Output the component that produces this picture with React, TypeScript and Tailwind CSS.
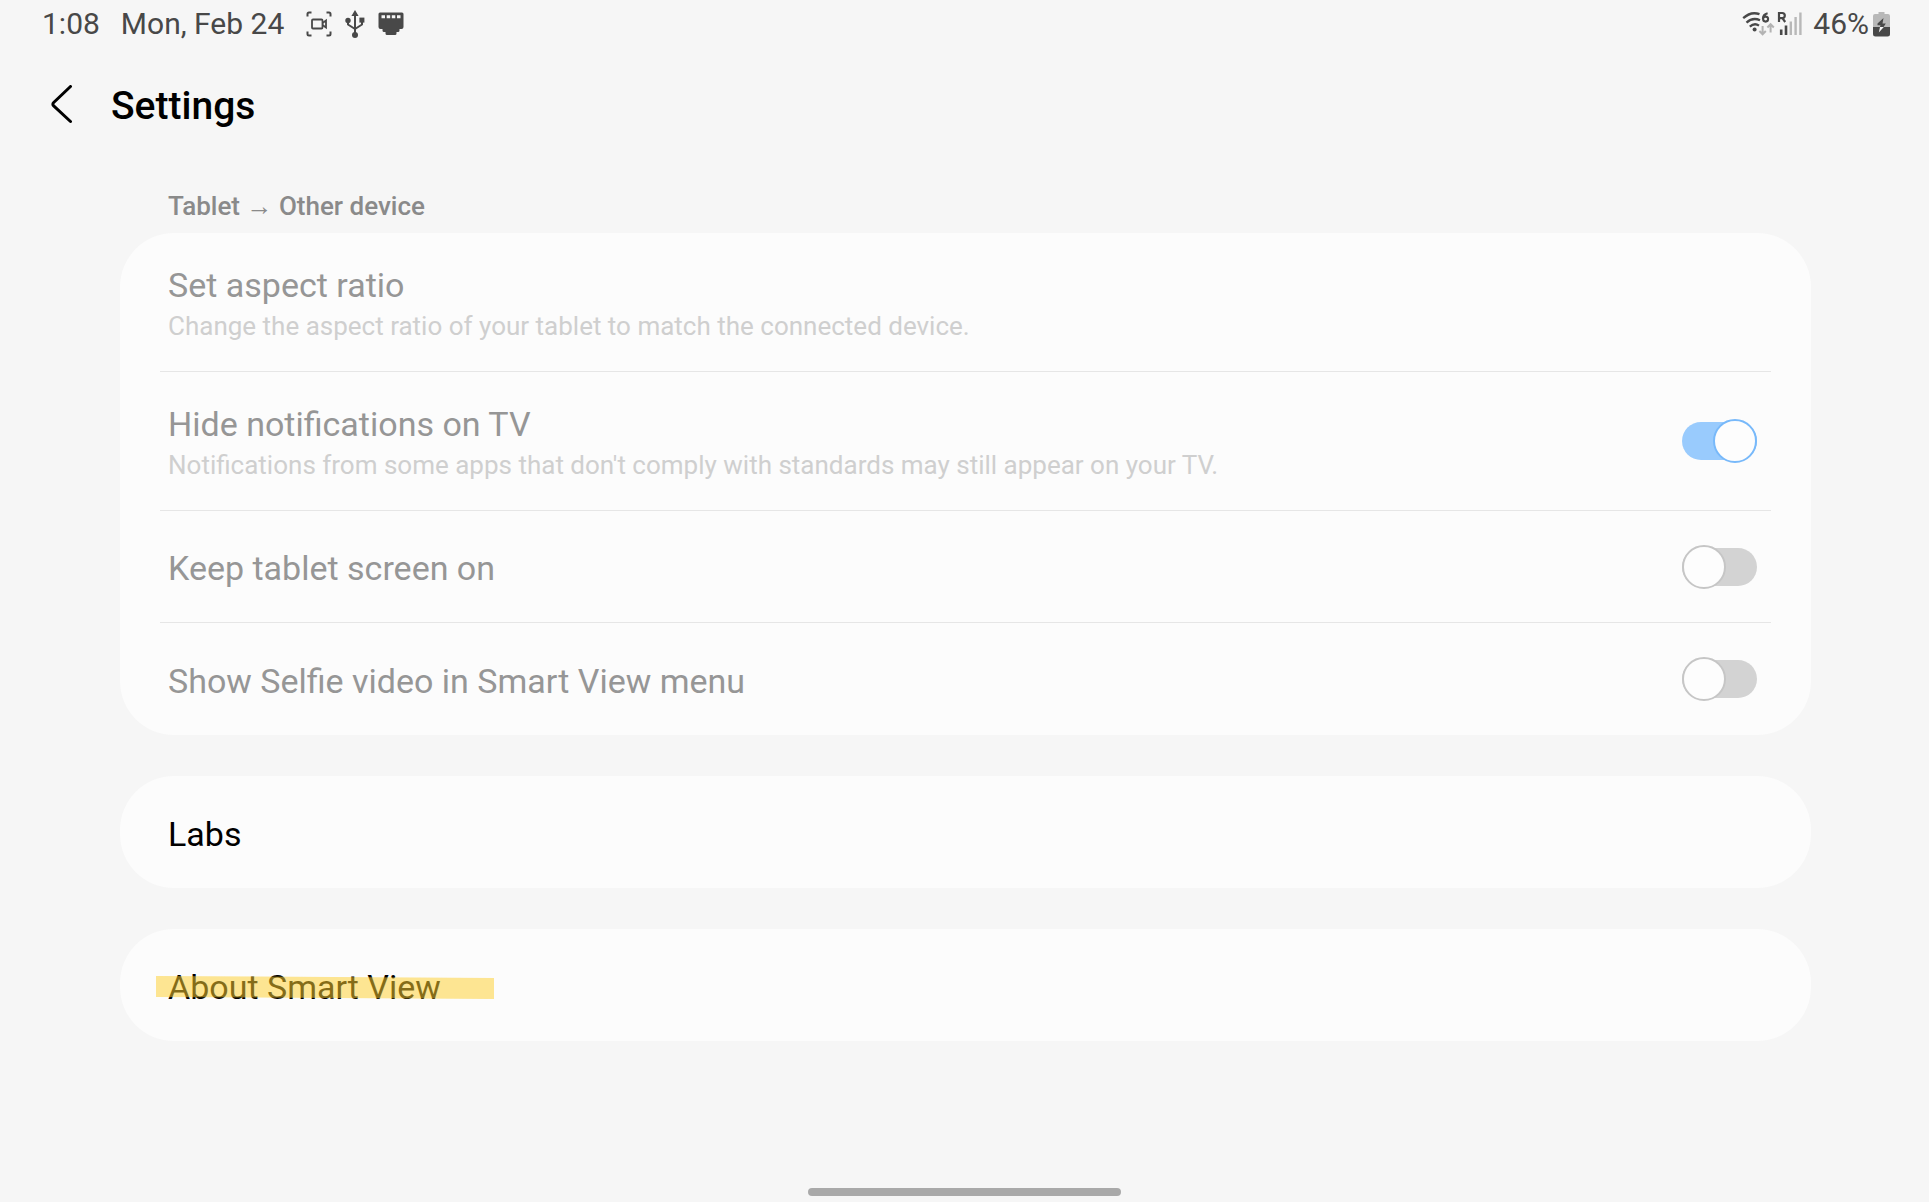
import type { ReactNode } from "react";

type Setting = {
  id: string;
  title: string;
  description?: string;
  checked?: boolean;
};

const mirroringSettings: Setting[] = [
  { id: "aspect-ratio", title: "Set aspect ratio", description: "Change the aspect ratio of your tablet to match the connected device." },
  {
    id: "hide-notifications",
    title: "Hide notifications on TV",
    description: "Notifications from some apps that don't comply with standards may still appear on your TV.",
    checked: true,
  },
  { id: "keep-screen-on", title: "Keep tablet screen on", checked: false },
  { id: "selfie-video", title: "Show Selfie video in Smart View menu", checked: false },
];

function RecordIcon() {
  return (
    <svg width="26" height="26" viewBox="0 0 26 26" fill="none" stroke="#484848" strokeWidth="2">
      <path d="M1.5 5.5V3Q1.5 1.5 3 1.5H5.5M20.5 1.5H23Q24.5 1.5 24.5 3V5.5M24.5 20.5V23Q24.5 24.5 23 24.5H20.5M5.5 24.5H3Q1.5 24.5 1.5 23V20.5" />
      <rect x="6" y="8.5" width="10.5" height="9" rx="1" strokeWidth="1.8" />
      <path d="M16.5 12L20 9.5V16.5L16.5 14" strokeWidth="1.8" />
    </svg>
  );
}

function UsbIcon() {
  return (
    <svg width="20" height="28" viewBox="0 0 20 28" fill="none">
      <path d="M10 4V24M3 10V14.5L10 19L17 14.5V10" stroke="#484848" strokeWidth="2" strokeLinejoin="round" />
      <path d="M10 0L13.6 6H6.4Z" fill="#484848" />
      <circle cx="10" cy="25" r="3" fill="#484848" />
      <circle cx="3" cy="10.5" r="2.7" fill="#484848" />
      <rect x="14.4" y="7.6" width="5" height="5" fill="#484848" />
    </svg>
  );
}

function EthernetIcon() {
  return (
    <svg width="26" height="24" viewBox="0 0 26 24">
      <path d="M2 0.5H24Q25.5 0.5 25.5 2V15Q25.5 17 23.5 17H21.5V18.5Q21.5 20 20 20H18.5V21.5Q18.5 23 17 23H9Q7.5 23 7.5 21.5V20H6Q4.5 20 4.5 18.5V17H2.5Q0.5 17 0.5 15V2Q0.5 0.5 2 0.5Z" fill="#484848" />
      <path d="M3.5 3.2H7V6.2H3.5ZM8.7 3.2H12.2V6.2H8.7ZM13.8 3.2H17.3V6.2H13.8ZM19 3.2H22.5V6.2H19Z" fill="#f6f6f6" />
    </svg>
  );
}

function WifiIcon() {
  return (
    <svg width="33" height="26" viewBox="0 0 33 26" fill="none">
      <g stroke="#484848" strokeWidth="2.3">
        <path d="M1.2 7.2Q9 0 17.5 3.2" />
        <path d="M4.5 11.6Q10.5 6 18 9.2" />
        <path d="M7.8 15.6Q12.5 11.5 17 14.6" />
      </g>
      <circle cx="12.6" cy="18.6" r="2" fill="#484848" />
      <path d="M25.6 2.2Q20.9 3.4 20.9 7.8M23.6 5.6A2.5 2.5 0 1 1 23.6 10.6A2.5 2.5 0 1 1 23.6 5.6" stroke="#484848" strokeWidth="2.1" />
      <path d="M20.6 15V23M17.4 20L20.6 23.3L23.8 20M28.6 21.5V13.5M25.4 16.5L28.6 13.2L31.8 16.5" stroke="#b3b3b3" strokeWidth="2" />
    </svg>
  );
}

function SignalIcon() {
  return (
    <svg width="26" height="26" viewBox="0 0 26 26" fill="none">
      <path d="M2 11V2H5.2A2.5 2.5 0 0 1 5.2 7.2H2M5.4 7.2L8.2 11" stroke="#484848" strokeWidth="2.2" />
      <path d="M4.2 24V18.6M9 24V14.6" stroke="#484848" strokeWidth="2.6" />
      <path d="M13.8 24V10.4M18.6 24V6M23.4 24V1.5" stroke="#b8b8b8" strokeWidth="2.4" />
    </svg>
  );
}

function BatteryIcon() {
  return (
    <svg width="17" height="25" viewBox="0 0 17 25">
      <path d="M5.5 0H11.5V2H15Q17 2 17 4V15H0V4Q0 2 2 2H5.5Z" fill="#b8b8b8" />
      <path d="M0 15H17V22Q17 24.5 14.5 24.5H2.5Q0 24.5 0 22Z" fill="#484848" />
      <path d="M10.5 6L4.5 11.5V13.2H7.5L7 15H10.5L12.8 11.5H9.5Z" fill="#484848" />
      <path d="M7 15H10.8L5.8 20.5Z" fill="#f6f6f6" />
    </svg>
  );
}

function StatusBar() {
  return (
    <div className="flex h-12 items-center justify-between pl-[42px] pr-[39px] text-[30px] leading-[48px] text-[#484848]">
      <div className="flex items-center">
        <span>1:08</span>
        <span className="ml-[21px]">Mon, Feb 24</span>
        <div className="ml-[22px] flex items-center gap-[13px]">
          <RecordIcon />
          <UsbIcon />
          <EthernetIcon />
        </div>
      </div>
      <div className="flex items-center">
        <WifiIcon />
        <span className="ml-[2px]"><SignalIcon /></span>
        <span className="ml-[10px]">46%</span>
        <span className="ml-1"><BatteryIcon /></span>
      </div>
    </div>
  );
}

function Card({ children }: { children: ReactNode }) {
  return <div className="rounded-[54px] bg-[#fcfcfc]">{children}</div>;
}

function Switch({ id, checked }: { id: string; checked: boolean }) {
  return (
    <input
      id={id}
      type="checkbox"
      role="switch"
      defaultChecked={checked}
      disabled
      className="relative h-[38px] w-[75px] shrink-0 appearance-none rounded-full bg-[#d3d3d3] before:absolute before:-top-[3px] before:left-0 before:size-11 before:rounded-full before:border-2 before:border-[#c6c6c6] before:bg-[#fdfdfd] checked:bg-[#99cbfd] checked:before:left-[31px] checked:before:border-[#78b9fa]"
    />
  );
}

function SettingRow({ setting }: { setting: Setting }) {
  const text = (
    <>
      <span className="block text-[34px] leading-[44px] text-[#969696]">{setting.title}</span>
      {setting.description && (
        <span className="block text-[26px] leading-[38px] text-[#cfcfcf]">{setting.description}</span>
      )}
    </>
  );
  const height = setting.description ? "min-h-[139px]" : "min-h-28";

  if (setting.checked === undefined) {
    return (
      <button type="button" disabled className={`${height} block w-full pl-2 pt-[3px] text-left`}>
        {text}
      </button>
    );
  }

  return (
    <div className={`${height} flex items-center justify-between pl-2 pr-[14px]`}>
      <label htmlFor={setting.id} className="pt-[3px]">{text}</label>
      <Switch id={setting.id} checked={setting.checked} />
    </div>
  );
}

export default function App() {
  return (
    <div className="flex min-h-screen flex-col bg-[#f6f6f6] font-['Roboto',sans-serif]">
      <StatusBar />

      <header className="flex h-[116px] items-center pl-[49px]">
        <button type="button" aria-label="Back" className="flex h-12 w-[26px] items-center">
          <svg width="26" height="42" viewBox="0 0 26 42" fill="none" stroke="#000" strokeWidth="3" strokeLinecap="round" strokeLinejoin="round">
            <path d="M21.5 1.5L4.7 17.5Q3 19.2 4.7 20.9L21.5 36.5" />
          </svg>
        </button>
        <h1 className="ml-9 text-[39px] font-medium leading-[48px] text-black">Settings</h1>
      </header>

      <main className="flex-1 pl-[120px] pr-[118px]">
        <h2 className="mt-6 mb-[9px] pl-12 text-[26px] font-medium leading-9 text-[#8a8a8a]">
          Tablet → Other device
        </h2>

        <div className="flex flex-col gap-[41px]">
          <Card>
            <div className="divide-y divide-[#e6e6e6] px-10">
              {mirroringSettings.map((setting) => (
                <SettingRow key={setting.id} setting={setting} />
              ))}
            </div>
          </Card>

          <Card>
            <button type="button" className="block h-28 w-full px-12 pt-[3px] text-left text-[34px] leading-[44px] text-black">
              Labs
            </button>
          </Card>

          <Card>
            <button type="button" className="block h-28 w-full px-12 pt-[3px] text-left text-[34px] leading-[44px] text-black">
              <span className="relative inline-block">
                About Smart View
                {/* marker stroke over the label */}
                <svg className="absolute -left-3 top-[11px] max-w-none" width="338" height="23" viewBox="0 0 338 23">
                  <path d="M0 0L338 2V23L0 21Z" fill="#fed02f" fillOpacity="0.52" />
                </svg>
              </span>
            </button>
          </Card>
        </div>
      </main>

      <div className="flex justify-center pb-[6px]">
        <div className="h-2 w-[313px] rounded-full bg-[#a9a9a9]" />
      </div>
    </div>
  );
}
